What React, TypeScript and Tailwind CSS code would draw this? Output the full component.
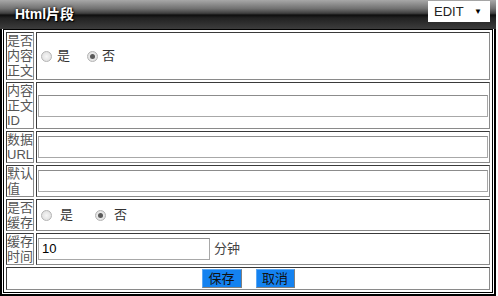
import React from 'react';

const cell =
  'border border-t-[#3a3a3a] border-l-[#3a3a3a] border-b-[#8a8a8a] border-r-[#8a8a8a]';

function Radio({ checked }: { checked?: boolean }) {
  return (
    <span className="flex h-[11px] w-[11px] shrink-0 items-center justify-center rounded-full border border-[#b4b4b4] bg-[radial-gradient(circle,#f6f6f6,#d9d9d9)]">
      {checked && <span className="h-[5px] w-[5px] rounded-full bg-[#5a5a5a]" />}
    </span>
  );
}

function TextBox({ value, className }: { value?: string; className?: string }) {
  return (
    <div
      className={
        'flex h-[22px] items-center border border-[#a8a8a8] border-t-[#8c8c8c] bg-white pl-[3px] text-[13px] text-black ' +
        (className || '')
      }
    >
      {value}
    </div>
  );
}

function Row({
  label,
  height,
  children,
}: {
  label: string[];
  height: string;
  children: React.ReactNode;
}) {
  return (
    <div className={'flex gap-[2px] ' + height}>
      <div className={cell + ' w-[28px] shrink-0 text-[13px] leading-[15px] text-[#555]'}>
        {label.map((l) => (
          <div key={l} className="whitespace-nowrap">
            {l}
          </div>
        ))}
      </div>
      <div className={cell + ' flex flex-1 flex-col justify-center px-0'}>{children}</div>
    </div>
  );
}

export default function App() {
  return (
    <div className="w-[496px] bg-white font-['Liberation_Sans','Noto_Sans_CJK_SC',sans-serif]">
      {/* title bar */}
      <div className="flex h-[29px] items-start justify-between bg-[linear-gradient(to_bottom,#a8a8a8_0%,#707070_30%,#3e3e3e_46%,#0e0e0e_52%,#222_62%,#3c3c3c_100%)] pr-[6px] pt-[1px]">
        <span className="ml-[15px] mt-[5px] text-[14px] font-bold leading-[17px] text-white [text-shadow:0_0_3px_#000,1px_1px_1px_#000]">
          Html片段
        </span>
        <div className="flex h-[21px] w-[62px] items-center justify-between bg-white pl-[6px] pr-[8px] text-[13px] text-[#222]">
          <span>EDIT</span>
          <span className="text-[8px] text-black">▼</span>
        </div>
      </div>

      {/* form */}
      <div className="border-x-2 border-b-2 border-black px-px pb-px">
        <div className="flex flex-col gap-[2px] border border-black p-[2px]">
          <Row label={['是否', '内容', '正文']} height="h-[48px]">
            <div className="flex items-center pl-[4px] text-[13px] text-[#333]">
              <Radio />
              <span className="ml-[5px]">是</span>
              <span className="ml-[17px]">
                <Radio checked />
              </span>
              <span className="ml-[4px]">否</span>
            </div>
          </Row>

          <Row label={['内容', '正文', 'ID']} height="h-[47px]">
            <TextBox className="mx-px" />
          </Row>

          <Row label={['数据', 'URL']} height="h-[32px]">
            <TextBox className="mx-px" />
          </Row>

          <Row label={['默认', '值']} height="h-[32px]">
            <TextBox className="mx-px" />
          </Row>

          <Row label={['是否', '缓存']} height="h-[32px]">
            <div className="flex items-center pl-[4px] text-[13px] text-[#333]">
              <Radio />
              <span className="ml-[8px]">是</span>
              <span className="ml-[22px]">
                <Radio checked />
              </span>
              <span className="ml-[8px]">否</span>
            </div>
          </Row>

          <Row label={['缓存', '时间']} height="h-[32px]">
            <div className="flex items-center pl-px">
              <TextBox value="10" className="w-[172px]" />
              <span className="ml-[4px] text-[13px] text-[#444]">分钟</span>
            </div>
          </Row>

          <div className={cell + ' flex h-[23px] items-center justify-center gap-[14px]'}>
            <button className="h-[19px] w-[40px] border border-[#5aa8f5] border-b-[#808080] border-r-[#808080] bg-[#1482f0] text-[13px] leading-[17px] text-[#111]">
              保存
            </button>
            <button className="h-[19px] w-[39px] border border-[#5aa8f5] border-b-[#808080] border-r-[#808080] bg-[#1482f0] text-[13px] leading-[17px] text-[#111]">
              取消
            </button>
          </div>
        </div>
      </div>
    </div>
  );
}
